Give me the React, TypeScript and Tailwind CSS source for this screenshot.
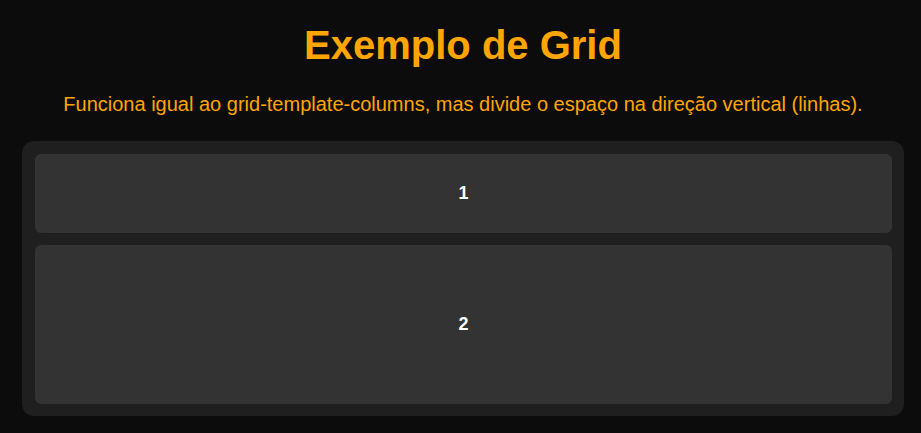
export default function App() {
  return (
    <div className="min-h-screen bg-[#0c0c0c] pt-[22px] pl-[22px] pr-[17px] pb-[17px] font-['Liberation_Sans',Arial,sans-serif]">
      <h1 className="text-center text-[40px] leading-[46px] font-bold text-[#ffa500]">Exemplo de Grid</h1>
      <p className="mt-[25px] text-center text-[20px] leading-[23px] text-[#ffa500]">
        Funciona igual ao grid-template-columns, mas divide o espaço na direção vertical (linhas).
      </p>

      <div className="mt-[25px] h-[275px] rounded-xl bg-[#1f1f1f] pt-[13px] pl-[13px] pr-3 pb-3 grid grid-rows-[1fr_2fr] gap-3">
        {['1', '2'].map(n => (
          <div key={n} className="flex items-center justify-center rounded-md bg-[#333333] text-[18px] font-bold text-white">
            {n}
          </div>
        ))}
      </div>
    </div>
  );
}
